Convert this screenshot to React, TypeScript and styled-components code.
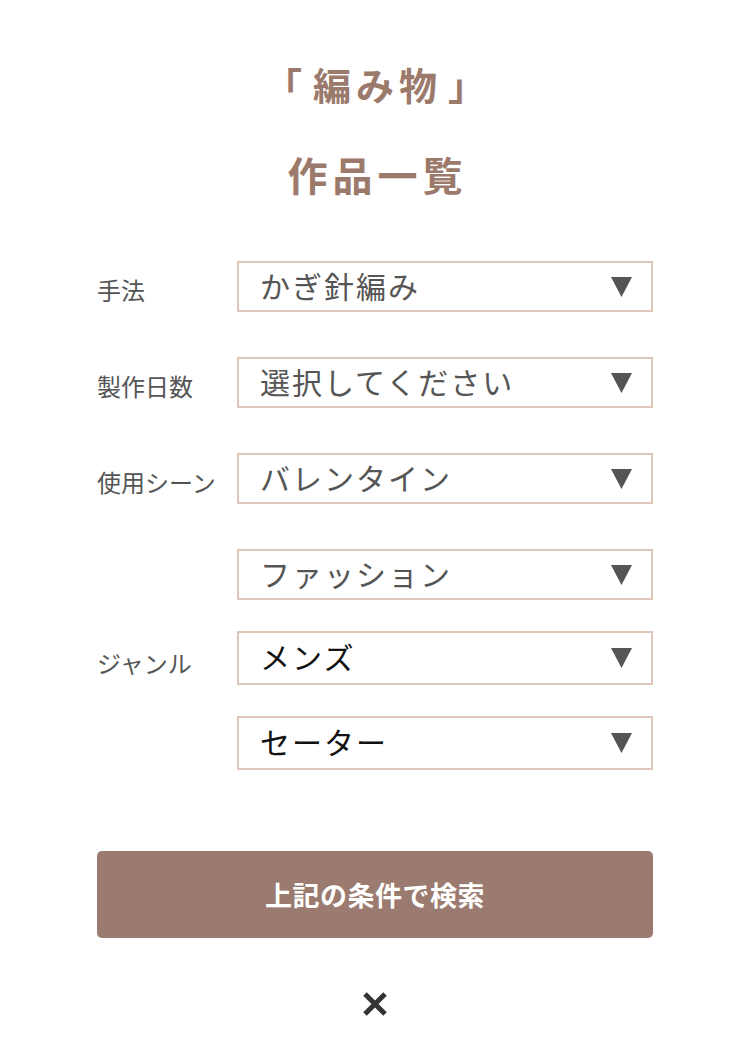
import React from 'react';
import styled, { createGlobalStyle } from 'styled-components';

const GlobalStyle = createGlobalStyle`
  html, body {
    margin: 0;
    padding: 0;
    background: #ffffff;
  }

  body {
    font-family: "Noto Sans CJK JP", "Noto Sans", sans-serif;
    color: #555555;
  }
`;

const Page = styled.div`
  width: 556px;
  margin: 0 auto;
  padding-top: 56px;
  padding-bottom: 40px;
`;

const Heading = styled.h1<{ $size: number; $spacing: number; $gap: number }>`
  margin: 0 0 ${(p) => p.$gap}px;
  padding-left: ${(p) => p.$spacing}px;
  text-align: center;
  font-size: ${(p) => p.$size}px;
  line-height: 56px;
  letter-spacing: ${(p) => p.$spacing}px;
  font-weight: 700;
  color: #9b7a6c;
`;

const Bracket = styled.span<{ $side: 'open' | 'close' }>`
  display: inline-block;
  margin-${(p) => (p.$side === 'open' ? 'right' : 'left')}: 6px;
`;

const Form = styled.form`
  display: flex;
  flex-direction: column;
  gap: 45px;
`;

const Field = styled.div`
  display: grid;
  grid-template-columns: 140px 1fr;
  align-items: center;
`;

const Label = styled.label`
  padding-top: 6px;
  font-size: 24px;
  line-height: 30px;
  color: #555555;
  white-space: nowrap;
`;

const Stack = styled.div`
  display: flex;
  flex-direction: column;
  gap: ${(p: { $gap: number }) => p.$gap}px;
`;

const SelectBox = styled.div<{ $height: number }>`
  position: relative;
  height: ${(p) => p.$height}px;
`;

const NativeSelect = styled.select<{ $filled: boolean }>`
  appearance: none;
  width: 100%;
  height: 100%;
  box-sizing: border-box;
  margin: 0;
  padding: 0 60px 5px 21px;
  border: 2px solid #dfc6bb;
  border-radius: 0;
  background: #ffffff;
  font-family: "Noto Sans CJK JP", "Noto Sans", sans-serif;
  font-size: 30px;
  letter-spacing: 2px;
  color: ${(p) => (p.$filled ? '#111111' : '#555555')};
  outline: none;
`;

const Arrow = styled.svg`
  position: absolute;
  right: 21px;
  top: 50%;
  width: 21px;
  height: 20px;
  transform: translateY(-50%);
  pointer-events: none;
`;

const SubmitButton = styled.button`
  display: block;
  width: 100%;
  height: 87px;
  margin-top: 81px;
  border: none;
  border-radius: 5px;
  background: #9b7b6f;
  color: #ffffff;
  font-family: "Noto Sans CJK JP", "Noto Sans", sans-serif;
  font-size: 27px;
  font-weight: 700;
  letter-spacing: 0.5px;
  cursor: pointer;
`;

const CloseButton = styled.button`
  display: flex;
  justify-content: center;
  align-items: center;
  width: 40px;
  height: 40px;
  margin: 46px auto 0;
  padding: 0;
  border: none;
  background: transparent;
  cursor: pointer;
`;

type SelectProps = {
  value: string;
  filled?: boolean;
  height?: number;
};

const Select: React.FC<SelectProps> = ({ filled = false, height = 51, value }) => (
  <SelectBox $height={height}>
    <NativeSelect
      $filled={filled}
      defaultValue={value}
    >
      <option value={value}>{value}</option>
    </NativeSelect>
    <Arrow viewBox='0 0 21 20'>
      <polygon
        fill='#555555'
        points='0,0 21,0 10.5,20'
      />
    </Arrow>
  </SelectBox>
);

const App: React.FC = () => (
  <>
    <GlobalStyle />
    <Page>
      <Heading
        $gap={34}
        $size={38}
        $spacing={5}
      >
        <Bracket $side='open'>「</Bracket>
        編み物
        <Bracket $side='close'>」</Bracket>
      </Heading>
      <Heading
        $gap={59}
        $size={40}
        $spacing={5}
      >
        作品一覧
      </Heading>

      <Form onSubmit={(e) => e.preventDefault()}>
        <Field>
          <Label>手法</Label>
          <Select value='かぎ針編み' />
        </Field>
        <Field>
          <Label>製作日数</Label>
          <Select value='選択してください' />
        </Field>
        <Field>
          <Label>使用シーン</Label>
          <Select value='バレンタイン' />
        </Field>
        <Field>
          <Label>ジャンル</Label>
          <Stack $gap={31}>
            <Select value='ファッション' />
            <Select
              filled
              height={54}
              value='メンズ'
            />
            <Select
              filled
              height={54}
              value='セーター'
            />
          </Stack>
        </Field>
      </Form>

      <SubmitButton type='button'>上記の条件で検索</SubmitButton>

      <CloseButton
        aria-label='閉じる'
        type='button'
      >
        <svg
          height='26'
          viewBox='0 0 26 26'
          width='26'
        >
          <path
            d='M3 3 L23 23 M23 3 L3 23'
            stroke='#333333'
            strokeWidth='5'
          />
        </svg>
      </CloseButton>
    </Page>
  </>
);

export default App;
